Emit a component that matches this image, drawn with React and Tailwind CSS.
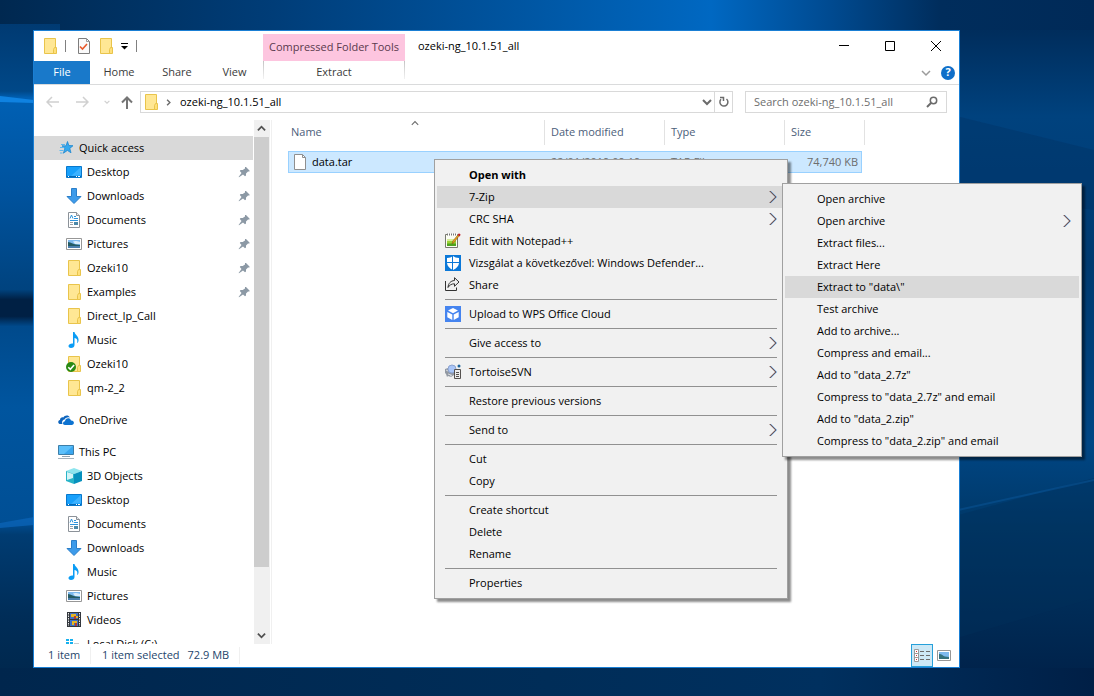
import React from "react";

const P = "shrink-0";

function Folder() {
  return (
    <svg className={P} width="16" height="16" viewBox="0 0 16 16" aria-hidden="true">
      <path d="M2.5.5h11v15h-11z" fill="#ffe794" stroke="#e9c44b" />
      <path d="M12.5 9.5h2v6h-3v-4z" fill="#ffe07a" stroke="#e9c44b" />
    </svg>
  );
}
function CheckedFolder() {
  return (
    <svg className={P} width="16" height="16" viewBox="0 0 16 16" aria-hidden="true">
      <path d="M2.5.5h11v15h-11z" fill="#ffe794" stroke="#e9c44b" />
      <path d="M12.5 9.5h2v6h-3v-4z" fill="#ffe07a" stroke="#e9c44b" />
      <circle cx="5" cy="11" r="5" fill="#2a8a14" />
      <path d="M2.3 11.3l2 2 3.8-4.3" fill="none" stroke="#fff" strokeWidth="1.6" />
    </svg>
  );
}
function Star() {
  return (
    <svg className={P} width="16" height="16" viewBox="0 0 16 16" aria-hidden="true">
      <path d="M9.5 1.5l1.3 4 4.2.2-3.2 2.7 1.2 4.4-3.6-2.4-4 2.8 1.5-4.6L4 5.8l4 .1z" fill="#36a9ee" stroke="#1e86cf" strokeWidth=".8" />
      <path d="M3 4.5h4M2 7.500h4M1.500 10.500h4M2 13h2.500" stroke="#5fb8ee" strokeWidth="1" />
    </svg>
  );
}
function Desktop() {
  return (
    <svg className={P} width="16" height="16" viewBox="0 0 16 16" aria-hidden="true">
      <path d="M.5 2.500h15v11H.5z" fill="#18a0fb" stroke="#0878cc" />
      <path d="M15 3v8L5 12z" fill="#3db2ff" />
      <path d="M1 12.500h14" stroke="#0669b5" />
      <path d="M2 12.500h1M10 12.500h1M12 12.500h2" stroke="#fff" />
    </svg>
  );
}
function Download() {
  return (
    <svg className={P} width="16" height="16" viewBox="0 0 16 16" aria-hidden="true">
      <path d="M5.500.5h5v8h4.500L8 15.500 1 8.500h4.500z" fill="#3d9bea" stroke="#2b7fc9" />
    </svg>
  );
}
function Documents() {
  return (
    <svg className={P} width="16" height="16" viewBox="0 0 16 16" aria-hidden="true">
      <path d="M2.500.5h8l3 3v12h-11z" fill="#fff" stroke="#8c9299" />
      <path d="M10.500.5v3h3" fill="#e4e6e8" stroke="#8c9299" />
      <path d="M4 6.500l1.500-3.500L7 6.500M8 4.500h2M8 6.500h4M4 8.500h8" stroke="#2c93dc" fill="none" />
      <path d="M4 10.500h3M4 12.500h3" stroke="#9aa0a6" />
      <path d="M8 10h4v3H8z" fill="#4c88a8" />
    </svg>
  );
}
function Pictures() {
  return (
    <svg className={P} width="16" height="16" viewBox="0 0 16 16" aria-hidden="true">
      <path d="M.5 2.500h15v11H.5z" fill="#fff" stroke="#979797" />
      <path d="M2 4h12v8H2z" fill="#7db9ee" />
      <path d="M2 6c3 0 5 2.500 8 2.500l4 .5v1H2z" fill="#245b63" />
      <path d="M2 10h12v2H2z" fill="#4b7fae" />
      <path d="M7 5.500c2-1 4-.5 7 .5v2H9z" fill="#d8ecfb" />
    </svg>
  );
}
function Music() {
  return (
    <svg className={P} width="16" height="16" viewBox="0 0 16 16" aria-hidden="true">
      <path d="M7 0h1.500c.3 3 4.800 4 4 9-.3 1-1 2-1.500 2 1-3 0-4.500-2.500-5v7c0 2-1.500 3-3.500 3-1.800 0-2.700-1-2.500-2.200.3-1.500 2-2.600 4.500-2.300z" fill="#0a9cf5" />
    </svg>
  );
}
function OneDrive() {
  return (
    <svg className={P} width="16" height="16" viewBox="0 0 16 16" aria-hidden="true">
      <path d="M4.500 12H1.800C-.4 11.500-.3 8.500 2 8c0-2 1.800-3 3.300-2.500C6.500 3 10.500 2.500 12 5.500c-2.500-.8-4.700.2-5.400 2C4.500 7.600 3.500 10 4.500 12z" fill="#0d64bd" />
      <path d="M6.800 13C4.500 13 4.300 9.600 7 9.200c.2-3.200 4.800-4 6 -.8 3.500-.3 4 4.600.6 4.600z" fill="#0d73d1" />
    </svg>
  );
}
function ThisPC() {
  return (
    <svg className={P} width="16" height="16" viewBox="0 0 16 16" aria-hidden="true">
      <path d="M.5 1.500h15v9H.5z" fill="#5cc0fb" stroke="#3d7ea8" />
      <path d="M15 2v8H6z" fill="#3aa7f0" />
      <path d="M4 12.500h8" stroke="#8fa3b3" />
      <path d="M0 14.500h16" stroke="#a5b2bd" />
    </svg>
  );
}
function Objects3D() {
  return (
    <svg className={P} width="16" height="16" viewBox="0 0 16 16" aria-hidden="true">
      <path d="M0 3l8-3 8 3-8 3z" fill="#8ee5ee" />
      <path d="M0 3l8 3v10l-8-3z" fill="#28b4c8" />
      <path d="M1 4l6 2v4l-6 2z" fill="#d3f4f7" />
      <path d="M16 3L8 6v10l8-3z" fill="#0791bd" />
    </svg>
  );
}
function Videos() {
  return (
    <svg className={P} width="16" height="16" viewBox="0 0 16 16" aria-hidden="true">
      <path d="M1 0h14v15H1z" fill="#33373d" />
      <path d="M2.500 1v13M13.500 1v13" stroke="#e8e8e8" strokeDasharray="1.500 1" />
      <path d="M4 1h8v6H4zM4 8h8v6H4z" fill="#3f6fc2" />
      <path d="M5 2h5v2h2v2H8V5H5zM6 9h5v2H8v2H6z" fill="#e5b722" />
      <path d="M8 4h2v3H8zM9 11h2v3H9z" fill="#ba3b2c" />
    </svg>
  );
}
function Disk() {
  return (
    <svg className={P} width="16" height="16" viewBox="0 0 16 16" aria-hidden="true">
      <path d="M0 3h3v2H0zM4 3h3v2H4zM0 6h3v2H0zM4 6h3v2H4z" fill="#16b1ee" />
      <path d="M8 7.500h5M0 9.500h15" stroke="#c9cdd0" />
      <path d="M0 10h15v4H0z" fill="#aeb4b9" />
    </svg>
  );
}
function Pin() {
  return (
    <svg className={P} width="12" height="12" viewBox="0 0 12 12" aria-hidden="true">
      <path d="M7 1h1l3.500 3.500v1h-1.500L8 7.500v2l-1 .8L5 8.500 1 11.300.6 11 3.500 7 1.800 5l.7-1h2.200L7 2.500z" fill="#8c99a5" />
    </svg>
  );
}
function FilePage() {
  return (
    <svg className={P} width="14" height="16" viewBox="0 0 14 16" aria-hidden="true">
      <path d="M1.500.5h8l3 3v12h-11z" fill="#fff" stroke="#8f8f8f" />
      <path d="M9.500.5v3h3" fill="none" stroke="#8f8f8f" />
    </svg>
  );
}
function PropsPage() {
  return (
    <svg className={P} width="14" height="16" viewBox="0 0 14 16" aria-hidden="true">
      <path d="M1.500.5h8l3 3v12h-11z" fill="#fafafa" stroke="#7d7d7d" />
      <path d="M9.500.5v3h3" fill="none" stroke="#9a9a9a" />
      <path d="M3 8.500l2.500 2.500 4.500-5" fill="none" stroke="#e8592b" strokeWidth="1.600" />
    </svg>
  );
}
function Notepad() {
  return (
    <svg className={P} width="16" height="16" viewBox="0 0 16 16" aria-hidden="true">
      <path d="M.5 1.500h12v13H.5z" fill="#fbfdf3" stroke="#77796f" />
      <path d="M2 6h9v3H2z" fill="#d6ec9a" />
      <path d="M2 8h9v3H2z" fill="#9bd334" />
      <path d="M2 10.500h9V13H2z" fill="#4ea31f" />
      <path d="M2 1.500h10" stroke="#fff" strokeWidth="2" />
      <path d="M2 1.500h10" stroke="#777" strokeDasharray="1 1" strokeWidth="2" />
      <path d="M7 11l.8-3L13 1.800l1.200 1L9 9.500z" fill="#e9a21d" stroke="#7b4c10" strokeWidth=".5" />
      <path d="M12.800 1.800L14 .3l1.700 1.400L14.500 3.500z" fill="#c21c25" />
    </svg>
  );
}
function Defender() {
  return (
    <svg className={P} width="16" height="16" viewBox="0 0 16 16" aria-hidden="true">
      <path d="M0 0h16v16H0z" fill="#0b78d8" />
      <path d="M8 1c1.500 1.300 3.500 1.900 6 2v5c-.3 3.200-2.500 5.300-6 7-3.500-1.700-5.700-3.800-6-7V3c2.500-.1 4.500-.7 6-2z" fill="#fff" />
      <path d="M7.500 0v16M1 7.500h14" stroke="#0b78d8" />
    </svg>
  );
}
function ShareIcon() {
  return (
    <svg className={P} width="16" height="16" viewBox="0 0 16 16" fill="none" stroke="#333" aria-hidden="true">
      <path d="M.5 4v9.500h11v-3" />
      <path d="M9.500.7l4.500 4.300-4.500 4.300V6.800C6.500 6.800 4.500 8 3 10.500c.3-4 2.500-6.700 6.500-7z" />
    </svg>
  );
}
function WpsCloud() {
  return (
    <svg className={P} width="16" height="16" viewBox="0 0 16 16" aria-hidden="true">
      <path d="M0 0h16v16H0z" fill="#4584ef" />
      <path d="M8 2l5 2.600L8 7.300 3 4.600zM2.300 6L7.300 8.600V14l-5-2.700zM13.700 6L8.700 8.600V14l5-2.700z" fill="#fff" />
    </svg>
  );
}
function Tortoise() {
  return (
    <svg className={P} width="16" height="16" viewBox="0 0 16 16" aria-hidden="true">
      <path d="M0 5l3-1 1 3 5 2v2l-3 2-3-1-1 1-1-3-1-1z" fill="#9299a3" />
      <path d="M1 6l2 1M3 10l3 1M5 12l2-1" stroke="#d8dade" />
      <circle cx="7" cy="5" r="4" fill="#a9c5f7" stroke="#8ba2cf" />
      <circle cx="14" cy="2" r="1.500" fill="#1f659b" />
      <path d="M9.500 5.500h6v9h-6z" fill="#eee" stroke="#55514f" />
      <path d="M11 8.500h3M11 10.500h3M11 12.500h3" stroke="#55514f" />
    </svg>
  );
}
function MenuArrow() {
  return (
    <svg className={P} width="8" height="14" viewBox="0 0 8 14" fill="none" aria-hidden="true">
      <path d="M1.500 1l6 6-6 6" stroke="#4a9be6" />
      <path d="M.7 1l6 6-6 6" stroke="#5b2c22" />
    </svg>
  );
}
function Chevron({ className, size = 10, w = 1.5, d = "M1 3l4 4 4-4" }) {
  return (
    <svg className={className} width={size} height={size} viewBox="0 0 10 10" fill="none" stroke="currentColor" strokeWidth={w} aria-hidden="true">
      <path d={d} />
    </svg>
  );
}

const quick = [
  ["Desktop", Desktop, true],
  ["Downloads", Download, true],
  ["Documents", Documents, true],
  ["Pictures", Pictures, true],
  ["Ozeki10", Folder, true],
  ["Examples", Folder, true],
  ["Direct_Ip_Call", Folder],
  ["Music", Music],
  ["Ozeki10", CheckedFolder],
  ["qm-2_2", Folder],
];
const pc = [
  ["3D Objects", Objects3D],
  ["Desktop", Desktop],
  ["Documents", Documents],
  ["Downloads", Download],
  ["Music", Music],
  ["Pictures", Pictures],
  ["Videos", Videos],
  ["Local Disk (C:)", Disk],
];

function NavItem({ label, Icon, pinned, root, selected }) {
  return (
    <li>
      <a
        href="#"
        className={`flex h-6 items-center gap-[5px] pr-[3px] ${root ? "pl-6" : "pl-8"} ${selected ? "bg-[#d9d9d9]" : ""}`}
      >
        <Icon />
        <span className="flex-1 whitespace-nowrap">{label}</span>
        {pinned && <Pin />}
      </a>
    </li>
  );
}

function Sidebar() {
  return (
    <nav className="flex w-[236px] shrink-0 overflow-hidden" aria-label="Navigation pane">
      <div className="flex-1 overflow-hidden pt-4">
        <ul>
          <NavItem label="Quick access" Icon={Star} root selected />
          {quick.map(([label, Icon, pinned], i) => (
            <NavItem key={i} label={label} Icon={Icon} pinned={pinned} />
          ))}
        </ul>
        <ul className="py-2">
          <NavItem label="OneDrive" Icon={OneDrive} root />
        </ul>
        <ul>
          <NavItem label="This PC" Icon={ThisPC} root />
          {pc.map(([label, Icon]) => (
            <NavItem key={label} label={label} Icon={Icon} />
          ))}
        </ul>
      </div>
      <div className="ml-px flex w-4 flex-col bg-[#f0f0f0] text-[#505050]">
        <button aria-label="Scroll up" className="flex h-[17px] items-center justify-center pr-px">
          <Chevron w={2} d="M1 7l4-4 4 4" size={9} />
        </button>
        <div className="mr-px flex-[430] bg-[#cdcdcd]" />
        <div className="flex-[60]" />
        <button aria-label="Scroll down" className="flex h-[17px] items-center justify-center pr-px">
          <Chevron w={2} size={9} />
        </button>
      </div>
    </nav>
  );
}

const mainMenu = [
  [{ label: "Open with", bold: true }, { label: "7-Zip", arrow: true, active: true, sub: true }, { label: "CRC SHA", arrow: true }, { label: "Edit with Notepad++", Icon: Notepad }, { label: "Vizsgálat a következővel: Windows Defender...", Icon: Defender }, { label: "Share", Icon: ShareIcon }],
  [{ label: "Upload to WPS Office Cloud", Icon: WpsCloud }],
  [{ label: "Give access to", arrow: true }],
  [{ label: "TortoiseSVN", Icon: Tortoise, arrow: true }],
  [{ label: "Restore previous versions" }],
  [{ label: "Send to", arrow: true }],
  [{ label: "Cut" }, { label: "Copy" }],
  [{ label: "Create shortcut" }, { label: "Delete" }, { label: "Rename" }],
  [{ label: "Properties" }],
];
const zipMenu = [
  [
    { label: "Open archive" },
    { label: "Open archive", arrow: true },
    { label: "Extract files..." },
    { label: "Extract Here" },
    { label: 'Extract to "data\\"', active: true },
    { label: "Test archive" },
    { label: "Add to archive..." },
    { label: "Compress and email..." },
    { label: 'Add to "data_2.7z"' },
    { label: 'Compress to "data_2.7z" and email' },
    { label: 'Add to "data_2.zip"' },
    { label: 'Compress to "data_2.zip" and email' },
  ],
];

function Menu({ groups, className, label }) {
  return (
    <div role="menu" aria-label={label} className={`absolute border border-[#a0a0a0] bg-[#f1f1f1] px-0.5 py-1 shadow-[3px_3px_2px_rgba(0,0,0,0.45)] ${className}`}>
      {groups.map((items, g) => (
        <div key={g} role="group">
          {g > 0 && <hr className="mx-2 my-[3px] border-t border-[#919191]" />}
          {items.map((it, i) => (
            <div key={i} className="relative">
              <button
                role="menuitem"
                className={`flex h-[22px] w-full items-center gap-2 pr-2 pl-2 text-left whitespace-nowrap ${it.active ? "bg-[#d9d9d9]" : ""} ${it.bold ? "font-bold" : ""}`}
              >
                <span className="w-4">{it.Icon && <it.Icon />}</span>
                <span className="flex-1">{it.label}</span>
                {it.arrow && <MenuArrow />}
              </button>
              {it.sub && <Menu groups={zipMenu} label="7-Zip" className="top-[-3px] left-[345px] w-[300px]" />}
            </div>
          ))}
        </div>
      ))}
    </div>
  );
}

function Backdrop() {
  return (
    <svg className="absolute inset-0 h-full w-full" viewBox="0 0 1094 696" preserveAspectRatio="none" aria-hidden="true">
      <defs>
        <linearGradient id="top" x1="0" x2="1" y1="0" y2="0">
          <stop offset="0" stopColor="#002850" />
          <stop offset=".25" stopColor="#003d78" />
          <stop offset=".5" stopColor="#0058a6" />
          <stop offset=".65" stopColor="#0068c2" />
          <stop offset=".76" stopColor="#004a90" />
          <stop offset=".86" stopColor="#002d5c" />
          <stop offset="1" stopColor="#002a58" />
        </linearGradient>
        <linearGradient id="left" x1="0" x2="0" y1="0" y2="1">
          <stop offset="0" stopColor="#003a72" />
          <stop offset=".1" stopColor="#004888" />
          <stop offset=".11" stopColor="#0060b4" />
          <stop offset=".25" stopColor="#00539e" />
          <stop offset=".395" stopColor="#00437f" />
          <stop offset=".41" stopColor="#002044" />
          <stop offset=".435" stopColor="#002044" />
          <stop offset=".45" stopColor="#004a8c" />
          <stop offset=".57" stopColor="#00559f" />
          <stop offset=".74" stopColor="#004f95" />
          <stop offset=".76" stopColor="#003c72" />
          <stop offset=".88" stopColor="#002d58" />
          <stop offset="1" stopColor="#00264a" />
        </linearGradient>
        <linearGradient id="right" x1="0" x2="0" y1="0" y2="1">
          <stop offset="0" stopColor="#002d5c" />
          <stop offset=".13" stopColor="#00427e" />
          <stop offset=".35" stopColor="#003a70" />
          <stop offset=".62" stopColor="#004684" />
          <stop offset=".75" stopColor="#003766" />
          <stop offset="1" stopColor="#001f46" />
        </linearGradient>
        <linearGradient id="bottom" x1="0" x2="1" y1="0" y2="0">
          <stop offset="0" stopColor="#00264d" />
          <stop offset=".5" stopColor="#002d58" />
          <stop offset=".75" stopColor="#00305f" />
          <stop offset="1" stopColor="#001f46" />
        </linearGradient>
      </defs>
      <rect width="1094" height="696" fill="url(#top)" />
      <rect y="24" width="60" height="672" fill="url(#left)" />
      <rect x="940" y="30" width="154" height="666" fill="url(#right)" />
      <rect y="668" width="1094" height="28" fill="url(#bottom)" />
      <path d="M940 112l154 38v60l-154-20z" fill="#003364" opacity=".4" />
      <path d="M940 520l154-42v120l-154 45z" fill="#003059" opacity=".4" />
      <path d="M940 514l154-34" stroke="#0a5699" strokeWidth="2" opacity=".5" />
      <path d="M0 96l34 4v3L0 102z" fill="#1186e6" opacity=".9" />
      <path d="M0 523l34-6v8L0 528z" fill="#0a63b5" opacity=".8" />
    </svg>
  );
}

const headCell = "border-r border-[#e2e2e2] text-left font-normal text-[#4c607a]";
const rowCell = "flex h-[22px] items-center border-y border-[#99d1ff] bg-[#cce8ff] whitespace-nowrap";

export default function App() {
  return (
    <main className="relative flex h-screen overflow-hidden bg-[#002a58] pt-[30px] pr-[134px] pb-7 pl-[33px] font-['Open_Sans','Noto_Sans',sans-serif] text-[11px] text-black">
      <Backdrop />
      <section className="relative flex min-w-0 flex-1 flex-col border border-[#1a7fd4] bg-white">
        <header className="flex h-[53px] shrink-0">
          <div className="flex flex-col">
            <div className="flex h-[30px] items-center gap-[7px] pl-2">
              <Folder />
              <span className="h-3 w-px bg-[#808080]" />
              <button aria-label="Properties" className="ml-1"><PropsPage /></button>
              <button aria-label="New folder"><Folder /></button>
              <button aria-label="Customize toolbar">
                <svg width="8" height="8" viewBox="0 0 8 8" aria-hidden="true"><path d="M0 1.500h7" stroke="#000" /><path d="M0 4h7L3.500 7.500z" /></svg>
              </button>
              <span className="h-3 w-px bg-[#808080]" />
            </div>
            <div className="flex h-[23px] text-[#3b3b3b]">
              <button className="w-14 bg-[#1979ca] text-white">File</button>
              <button className="w-[58px]">Home</button>
              <button className="w-[58px]">Share</button>
              <button className="w-[57px]">View</button>
            </div>
          </div>
          <div className="flex w-[142px] flex-col pt-[3px] text-[#3b3b3b]">
            <div className="flex h-[27px] items-center justify-center bg-[#fdc5df] whitespace-nowrap text-[#5a3a4d]">Compressed Folder Tools</div>
            <div className="flex h-[23px]">
              <span className="h-[18px] w-px bg-linear-to-b from-[#c4c4c4] to-[#f2f2f2]" />
              <button className="flex-1">Extract</button>
              <span className="h-[18px] w-px bg-linear-to-b from-[#c4c4c4] to-[#f2f2f2]" />
            </div>
          </div>
          <h1 className="flex h-[30px] flex-1 items-center pl-[13px]">ozeki-ng_10.1.51_all</h1>
          <div className="flex flex-col items-end">
            <div className="flex h-[30px]">
              <button aria-label="Minimize" className="flex w-[46px] items-center justify-center"><svg width="10" height="10" aria-hidden="true"><path d="M0 4.500h10" stroke="#000" /></svg></button>
              <button aria-label="Maximize" className="flex w-[46px] items-center justify-center"><svg width="10" height="10" aria-hidden="true"><path d="M.5.5h9v9h-9z" fill="none" stroke="#000" /></svg></button>
              <button aria-label="Close" className="flex w-[46px] items-center justify-center"><svg width="10" height="10" aria-hidden="true"><path d="M0 0l10 10M10 0L0 10" stroke="#000" /></svg></button>
            </div>
            <div className="flex h-[23px] items-center gap-2.5 pr-1">
              <button aria-label="Expand ribbon" className="text-[#9b9b9b]"><Chevron /></button>
              <button aria-label="Help" className="flex size-[14px] items-center justify-center rounded-full bg-[#0f6fc9] text-[11px] font-bold text-white">?</button>
            </div>
          </div>
        </header>
        <div className="flex shrink-0 items-center border-t border-[#dadbdc] pt-1.5 pr-3 pb-[7px] pl-3">
          <div className="flex w-[94px] items-center text-[#d0d0d0]">
            <button aria-label="Back" className="mr-[17px]"><svg width="13" height="12" fill="none" stroke="currentColor" strokeWidth="1.500" aria-hidden="true"><path d="M13 6H1M6 1L1 6l5 5" /></svg></button>
            <button aria-label="Forward" className="mr-[15px]"><svg width="13" height="12" fill="none" stroke="currentColor" strokeWidth="1.500" aria-hidden="true"><path d="M0 6h12M7 1l5 5-5 5" /></svg></button>
            <button aria-label="Recent locations" className="mr-[11px]"><Chevron size={6} w={2} /></button>
            <button aria-label="Up" className="text-[#757575]"><svg width="12" height="13" fill="none" stroke="currentColor" strokeWidth="2" aria-hidden="true"><path d="M6 13V1.500M1 6.500l5-5 5 5" /></svg></button>
          </div>
          <div className="flex h-[22px] flex-1 items-center border border-[#d9d9d9] pl-0.5">
            <Folder />
            <Chevron className="mx-1.5 text-[#6b6b6b]" size={7} w={2} d="M3 1l4 4-4 4" />
            <span className="flex-1 pl-0.5">ozeki-ng_10.1.51_all</span>
            <button aria-label="Previous locations" className="mr-0.5 text-[#6b6b6b]"><Chevron w={2} size={10} /></button>
            <button aria-label="Refresh" className="flex h-full w-[18px] items-center justify-center border-l border-[#d9d9d9] text-[#6b6b6b]">
              <svg width="12" height="12" viewBox="0 0 12 12" fill="none" stroke="currentColor" strokeWidth="1.500" aria-hidden="true"><path d="M8.500 3A4 4 0 1 1 3 3.300M2 1.500h3.500V5" /></svg>
            </button>
          </div>
          <label className="ml-3 flex h-[22px] w-[202px] items-center border border-[#d9d9d9] pr-2 pl-2">
            <input type="text" aria-label="Search" placeholder="Search ozeki-ng_10.1.51_all" className="min-w-0 flex-1 outline-none placeholder:text-[#6d6d6d]" />
            <svg width="12" height="12" viewBox="0 0 12 12" fill="none" stroke="#6b6b6b" aria-hidden="true"><circle cx="7.500" cy="4.500" r="3.200" strokeWidth="1.500" /><path d="M5 7L1 11" strokeWidth="2" /></svg>
          </label>
        </div>
        <div className="flex min-h-0 flex-1">
          <Sidebar />
          <div className="ml-px min-w-0 flex-1 border-l border-[#f0f0f0] pl-4">
            <table className="w-[577px] table-fixed border-separate border-spacing-0">
              <thead>
                <tr className="h-[25px]">
                  <th className={`${headCell} relative w-[257px] pl-[3px]`}>
                    Name
                    <Chevron className="absolute top-0 left-[123px] text-[#6b6b6b]" size={8} w={1.3} d="M1 6l4-4 4 4" />
                  </th>
                  <th className={`${headCell} w-[120px] pl-1.5`}>Date modified</th>
                  <th className={`${headCell} w-[120px] pl-1.5`}>Type</th>
                  <th className={`${headCell} w-20 pl-1.5`}>Size</th>
                </tr>
              </thead>
              <tbody className="text-[#6d6d6d]">
                <tr>
                  <td className="pt-1.5"><div className={`${rowCell} gap-[5px] border-l pl-1 text-black`}><FilePage />data.tar</div></td>
                  <td className="pt-1.5"><div className={`${rowCell} pl-1.5`}>22/01/2019 09:19</div></td>
                  <td className="pt-1.5"><div className={`${rowCell} pl-1.5`}>TAR File</div></td>
                  <td className="pt-1.5 pr-[3px]"><div className={`${rowCell} justify-end border-r pr-[3px]`}>74,740 KB</div></td>
                </tr>
              </tbody>
            </table>
          </div>
        </div>
        <footer className="flex h-[23px] shrink-0 items-center pl-3.5 text-[#26456b]">
          <span className="w-[43px] border-r border-[#f0f0f0] whitespace-nowrap">1 item</span>
          <span className="pl-[11px]">1 item selected</span>
          <span className="border-r border-[#f0f0f0] pr-2.5 pl-2">72.9 MB</span>
          <div className="ml-auto flex items-center gap-1 pr-2">
            <button aria-label="Details view" className="flex h-[23px] w-[22px] items-center justify-center border border-[#26a0da] bg-[#cce8f6]">
              <svg width="16" height="14" viewBox="0 0 16 14" fill="none" aria-hidden="true">
                <path d="M.5.5h4v12h-4zM.5 4.500h4M.5 8.500h4" stroke="#9b9b9b" fill="#fff" />
                <path d="M6 2.500h4M12 2.500h4M6 6.500h4M12 6.500h4M6 10.500h4M12 10.500h4" stroke="#6b6b6b" />
                <path d="M2 2.500h1M2 6.500h1M2 10.500h1" stroke="#c33" />
              </svg>
            </button>
            <button aria-label="Large icons view"><svg width="14" height="11" viewBox="0 0 14 11" aria-hidden="true"><path d="M.5.5h13v10H.5z" fill="#fff" stroke="#979797" /><path d="M2 2h10v7H2z" fill="#7db9ee" /><path d="M2 4c3 0 4 2 6 2.500l4 .5v2H2z" fill="#34717c" /></svg></button>
          </div>
        </footer>
      </section>
      <Menu groups={mainMenu} label="File actions" className="top-[159px] left-[434px] w-[354px]" />
    </main>
  );
}
